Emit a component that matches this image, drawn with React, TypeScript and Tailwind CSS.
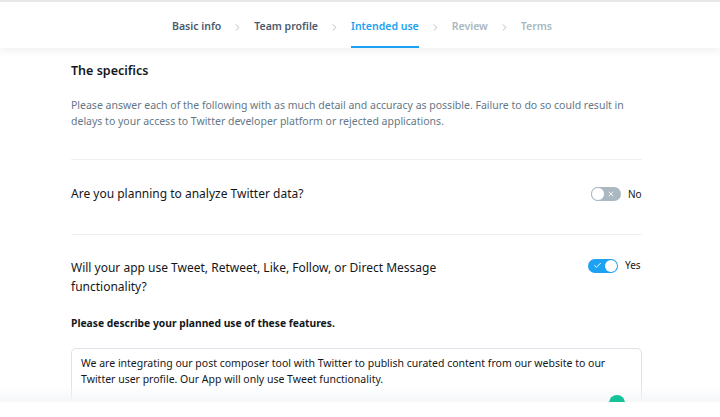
import { Check, ChevronRight, X } from 'lucide-react';

const STEPS = [
  { label: 'Basic info', state: 'done' },
  { label: 'Team profile', state: 'done' },
  { label: 'Intended use', state: 'active' },
  { label: 'Review', state: 'todo' },
  { label: 'Terms', state: 'todo' },
];

function Toggle({ on }: { on: boolean }) {
  if (on) {
    return (
      <span className="relative flex h-[14px] w-[30px] items-center rounded-full bg-[#1da1f2]">
        <Check size={9} strokeWidth={2.5} className="ml-[5px] text-white" />
        <span className="absolute right-[1px] top-[1px] h-[12px] w-[12px] rounded-full bg-white" />
      </span>
    );
  }
  return (
    <span className="relative flex h-[14px] w-[30px] items-center justify-end rounded-full bg-[#aab8c2]">
      <X size={8} strokeWidth={2.5} className="mr-[6px] text-white" />
      <span className="absolute left-0 top-0 h-[14px] w-[14px] rounded-full border border-[#aab8c2] bg-white" />
    </span>
  );
}

export default function App() {
  return (
    <div
      className="flex h-[417px] w-[720px] flex-col overflow-hidden bg-white text-[#14171a]"
      style={{ fontFamily: '"Noto Sans", "Open Sans", sans-serif' }}
    >
      <header className="relative z-10 h-[48px] shrink-0 border-t-2 border-[#e6e8ea] bg-white shadow-[0_3px_8px_rgba(20,23,26,0.06)]">
        <nav className="flex h-full items-center justify-center pl-[4px]">
          {STEPS.map((s, i) => (
            <div key={s.label} className="flex h-full items-center">
              {i > 0 && <ChevronRight size={11} className="mx-[11px] mt-[4px] text-[#aab8c2]" />}
              <span
                className={
                  'flex h-full items-center border-b-2 pt-[5px] text-[10.5px] font-semibold ' +
                  (s.state === 'active'
                    ? 'border-[#1da1f2] text-[#1da1f2]'
                    : s.state === 'done'
                      ? 'border-transparent text-[#4b5b6b]'
                      : 'border-transparent text-[#aab8c2]')
                }
              >
                {s.label}
              </span>
            </div>
          ))}
        </nav>
      </header>

      <main className="relative flex-1 overflow-hidden">
        <div className="mx-[71px] w-[571px]">
          <h2 className="mt-[14px] text-[12.5px] font-semibold leading-[18px]">The specifics</h2>
          <p className="mt-[17px] text-[10.5px] leading-[16px] text-[#657786]">
            Please answer each of the following with as much detail and accuracy as possible. Failure to do so could
            result in delays to your access to Twitter developer platform or rejected applications.
          </p>

          <div className="mt-[30px] flex items-center justify-between border-t border-[#eef1f3] pb-[31px] pt-[25px]">
            <span className="text-[12px] leading-[18px]">Are you planning to analyze Twitter data?</span>
            <div className="flex items-center gap-[7px]">
              <Toggle on={false} />
              <span className="w-[14px] text-[10px]">No</span>
            </div>
          </div>

          <div className="flex items-start justify-between border-t border-[#eef1f3] pt-[23px]">
            <span className="w-[400px] text-[12px] leading-[19px]">
              Will your app use Tweet, Retweet, Like, Follow, or Direct Message functionality?
            </span>
            <div className="mr-[1px] flex items-center gap-[7px]">
              <Toggle on={true} />
              <span className="w-[16px] text-[10px]">Yes</span>
            </div>
          </div>

          <h3 className="mt-[19px] text-[10.3px] font-bold leading-[16px]">
            Please describe your planned use of these features.
          </h3>

          <div className="relative mt-[17px] h-[90px] rounded-[5px] border border-[#dde3e8] px-[9px] py-[6px] text-[10.5px] leading-[16px]">
            We are integrating our post composer tool with Twitter to publish curated content from our website to our
            Twitter user profile. Our App will only use Tweet functionality.
            <span className="absolute left-[537px] top-[46px] z-20 h-[16px] w-[16px] rounded-full bg-[#15c39a]" />
          </div>
        </div>
        <div className="absolute bottom-0 left-0 right-0 h-[17px] bg-gradient-to-b from-white/0 to-[#f5f7f8]" />
      </main>

      <footer className="relative z-10 h-[15px] shrink-0 bg-white" />
    </div>
  );
}
